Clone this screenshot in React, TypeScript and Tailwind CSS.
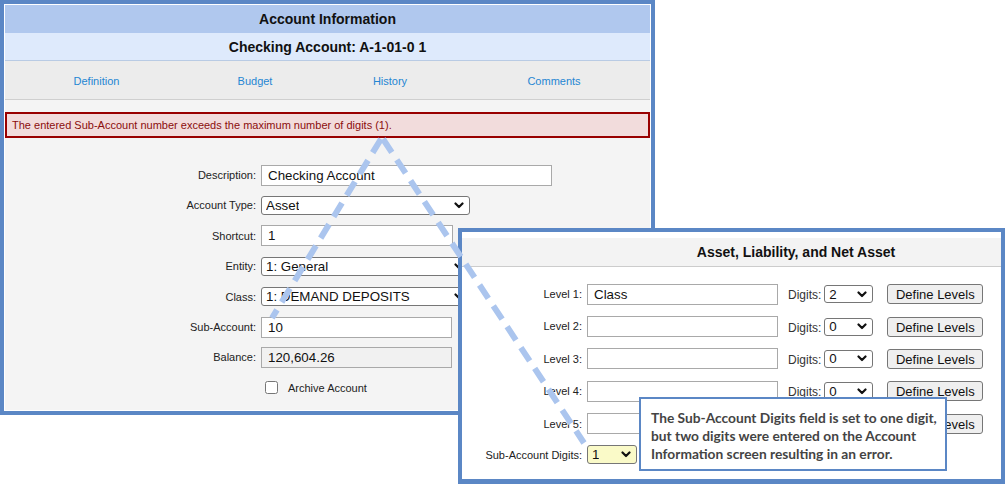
import React from "react";

function Chevron() {
  return (
    <svg width="10" height="7" viewBox="0 0 10 7" className="shrink-0">
      <path
        d="M1.5 1.5 L5 5 L8.5 1.5"
        fill="none"
        stroke="#111"
        strokeWidth="2.2"
        strokeLinecap="round"
        strokeLinejoin="round"
      />
    </svg>
  );
}

// looks like a native dropdown, but lets the text sit in the middle
function Select({ value, className }: { value: string; className: string }) {
  return (
    <div
      className={`flex items-center justify-between rounded-[3px] border border-[#767676] pl-[4px] pr-[5px] text-[13.33px] leading-none text-[#111] ${className}`}
    >
      <span className="truncate">{value}</span>
      <Chevron />
    </div>
  );
}

function TextInput({ value, className }: { value: string; className: string }) {
  return (
    <input
      readOnly
      defaultValue={value}
      className={`h-[21px] border border-[#a9a9a9] px-[6px] text-[13.33px] text-[#111] outline-none ${className}`}
    />
  );
}

function FormRow({ label, children }: { label: string; children: React.ReactNode }) {
  return (
    <div className="flex h-[30.4px] items-center gap-[5px]">
      <div className="w-[251px] text-right text-[11px] text-[#222]">{label}</div>
      {children}
    </div>
  );
}

function LevelRow({ label, value, digits }: { label: string; value: string; digits: string }) {
  return (
    <div className="flex h-[32.4px] items-center">
      <div className="w-[120px] text-right text-[11px] text-[#222]">{label}</div>
      <TextInput value={value} className="ml-[5px] w-[191px] bg-white" />
      <span className="ml-[10px] mt-[2px] text-[12px] text-[#333]">Digits:</span>
      <Select value={digits} className="ml-[3px] h-[18px] w-[49px] bg-white" />
      <button className="ml-[14px] h-[20px] w-[96px] rounded-[3px] border border-[#767676] bg-[#efefef] text-[13px] text-[#111]">
        Define Levels
      </button>
    </div>
  );
}

export default function App() {
  const tabs = [
    { name: "Definition", w: "w-[183px]" },
    { name: "Budget", w: "w-[134px]" },
    { name: "History", w: "w-[136px]" },
    { name: "Comments", w: "flex-1" },
  ];

  return (
    <div className="relative h-[484px] w-[1005px] overflow-hidden bg-white font-['Liberation_Sans',Arial,sans-serif]">
      {/* Account Information window */}
      <div className="absolute left-0 top-0 h-[415px] w-[655px] border-4 border-[#5b87c5] bg-white p-px">
        <div className="flex h-full flex-col">
          <div className="flex h-[28px] items-center justify-center bg-[#b0c8ee] text-[14px] font-bold text-[#111]">
            Account Information
          </div>
          <div className="flex h-[28px] items-center justify-center border-b border-[#b9cbe4] bg-[#deeafc] pt-px text-[14px] font-bold text-[#111]">
            Checking Account: A-1-01-0 1
          </div>
          <div className="flex h-[39px] items-center border-b border-[#cfcfcf] bg-[#ececec] pt-[2px]">
            {tabs.map((t) => (
              <div key={t.name} className={`${t.w} text-center text-[11px] text-[#2586d3]`}>
                {t.name}
              </div>
            ))}
          </div>
          <div className="flex-1 bg-[#f4f4f4] pt-[12px]">
            <div className="flex h-[26px] items-center border-2 border-[#990000] bg-[#f2dcdc] pl-[5px] text-[11px] text-[#8b0d0d]">
              The entered Sub-Account number exceeds the maximum number of digits (1).
            </div>
            <div className="mt-[22px]">
              <FormRow label="Description:">
                <TextInput value="Checking Account" className="w-[291px] bg-white" />
              </FormRow>
              <FormRow label="Account Type:">
                <Select value="Asset" className="h-[19px] w-[209px] bg-white" />
              </FormRow>
              <FormRow label="Shortcut:">
                <TextInput value="1" className="w-[192px] bg-white" />
              </FormRow>
              <FormRow label="Entity:">
                <Select value="1: General" className="h-[19px] w-[209px] bg-white" />
              </FormRow>
              <FormRow label="Class:">
                <Select value="1: DEMAND DEPOSITS" className="h-[19px] w-[209px] bg-white" />
              </FormRow>
              <FormRow label="Sub-Account:">
                <TextInput value="10" className="w-[191px] bg-white" />
              </FormRow>
              <FormRow label="Balance:">
                <TextInput value="120,604.26" className="w-[191px] bg-[#f1f1f1]" />
              </FormRow>
              <div className="flex h-[30.4px] items-center pl-[256px]">
                <input type="checkbox" className="m-0 ml-[4px] h-[13px] w-[13px]" />
                <span className="ml-[10px] text-[11px] text-[#222]">Archive Account</span>
              </div>
            </div>
          </div>
        </div>
      </div>

      {/* Asset, Liability, and Net Asset window */}
      <div className="absolute left-[458px] top-[228px] h-[256px] w-[547px] border-4 border-b-[5px] border-[#5b87c5] bg-white pt-[6px]">
        <div className="flex h-[29px] items-center justify-center border-b border-[#cccccc] bg-[#f3f3f3] pl-[129px] pt-px text-[14px] font-bold text-[#111]">
          Asset, Liability, and Net Asset
        </div>
        <div className="pt-[11px]">
          <LevelRow label="Level 1:" value="Class" digits="2" />
          <LevelRow label="Level 2:" value="" digits="0" />
          <LevelRow label="Level 3:" value="" digits="0" />
          <LevelRow label="Level 4:" value="" digits="0" />
          <LevelRow label="Level 5:" value="" digits="0" />
          <div className="flex h-[30px] items-center">
            <div className="w-[120px] text-right text-[11px] text-[#222]">Sub-Account Digits:</div>
            <Select value="1" className="ml-[5px] h-[19px] w-[50px] bg-[#fafac8]" />
          </div>
        </div>
      </div>

      {/* dashed pointer lines */}
      <svg
        width="1005"
        height="484"
        viewBox="0 0 1005 484"
        className="pointer-events-none absolute left-0 top-0"
      >
        <line x1="381" y1="139" x2="272" y2="318" stroke="#abc5ee" strokeWidth="6" strokeDasharray="16 9" />
        <line x1="383" y1="139" x2="584" y2="443" stroke="#abc5ee" strokeWidth="6" strokeDasharray="16 9" />
      </svg>

      {/* callout */}
      <div className="absolute left-[639px] top-[397px] h-[74px] w-[308px] border-2 border-[#5b87c5] bg-white pl-[10px] pt-[10px] font-['Lato',sans-serif] text-[13.75px] font-bold leading-[18px] text-[#444444]">
        <div>The Sub-Account Digits field is set to one digit,</div>
        <div>but two digits were entered on the Account</div>
        <div>Information screen resulting in an error.</div>
      </div>
    </div>
  );
}
